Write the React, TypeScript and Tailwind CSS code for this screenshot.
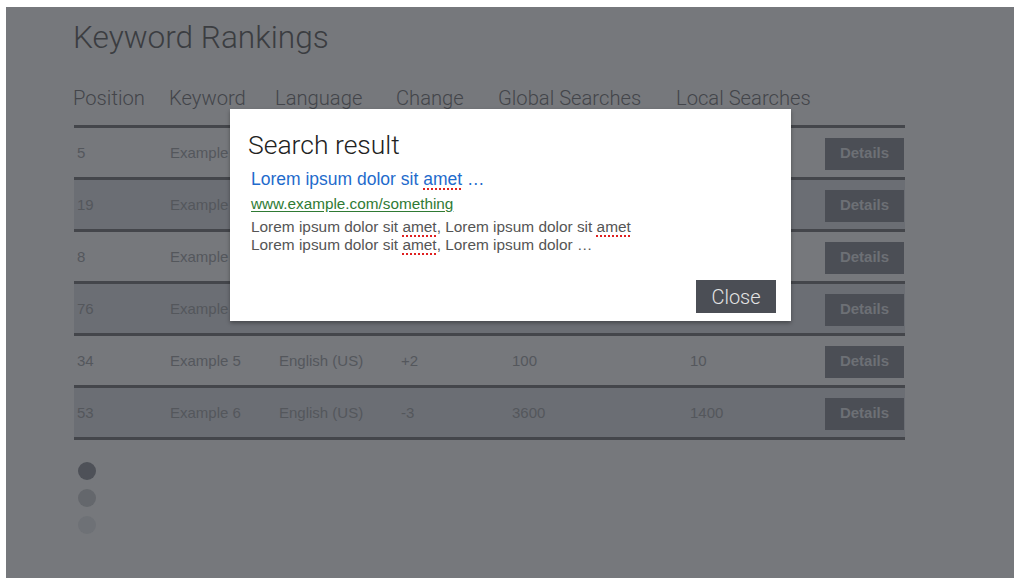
import React from 'react';

type Row = {
  pos: string;
  keyword: string;
  language: string;
  change: string;
  global: string;
  local: string;
};

const rows: Row[] = [
  { pos: '5', keyword: 'Example 1', language: 'English (US)', change: '+1', global: '2400', local: '880' },
  { pos: '19', keyword: 'Example 2', language: 'English (US)', change: '-4', global: '720', local: '90' },
  { pos: '8', keyword: 'Example 3', language: 'English (US)', change: '0', global: '1900', local: '320' },
  { pos: '76', keyword: 'Example 4', language: 'English (US)', change: '+12', global: '260', local: '40' },
  { pos: '34', keyword: 'Example 5', language: 'English (US)', change: '+2', global: '100', local: '10' },
  { pos: '53', keyword: 'Example 6', language: 'English (US)', change: '-3', global: '3600', local: '1400' },
];

const light = { fontFamily: 'Roboto, "Liberation Sans", sans-serif' };
const sans = { fontFamily: '"Liberation Sans", Arial, sans-serif' };

const cols = 'grid grid-cols-[93px_109px_122px_111px_178px_1fr] items-center';

function Amet() {
  return (
    <span className="underline decoration-dotted decoration-[#e02020] decoration-2 underline-offset-[3px]">amet</span>
  );
}

function ResultModal() {
  return (
    <div
      className="absolute left-[224px] top-[102px] w-[561px] h-[212px] bg-white shadow-[0_2px_4px_rgba(0,0,0,0.35)] flex flex-col"
      style={sans}
    >
      <h2 className="pl-[18px] pt-[21px] text-[26.5px] leading-[30px] font-light text-[#222]" style={light}>
        Search result
      </h2>
      <div className="pl-[21px]">
        <a className="block mt-[9px] text-[17.5px] leading-[20px] text-[#1f6bcc]">
          Lorem ipsum dolor sit <Amet /> …
        </a>
        <div className="mt-[6px] text-[15.3px] leading-[18px] text-[#2f7a34] underline underline-offset-2">
          www.example.com/something
        </div>
        <p className="mt-[5px] text-[15.4px] leading-[18px] text-[#555]">
          Lorem ipsum dolor sit <Amet />, Lorem ipsum dolor sit <Amet />
          <br />
          Lorem ipsum dolor sit <Amet />, Lorem ipsum dolor …
        </p>
      </div>
      <button
        className="mt-auto self-end mr-[15px] mb-[8px] w-[80px] h-[33px] bg-[#4b4e55] text-[20px] font-light text-[#e4e4e4]"
        style={light}
      >
        Close
      </button>
    </div>
  );
}

export default function App() {
  return (
    <div className="min-h-screen bg-white pt-[7px] pl-[6px]">
      <div className="relative h-[571px] bg-[#76787c] pl-[67px] overflow-hidden">
        <h1 className="pt-[13px] text-[31.6px] leading-[36px] font-light text-[#3b3d41]" style={light}>
          Keyword Rankings
        </h1>

        <div
          className="mt-[30px] flex text-[20.2px] leading-[24px] font-light text-[#43454a] whitespace-nowrap"
          style={light}
        >
          <span className="w-[96px]">Position</span>
          <span className="w-[106px]">Keyword</span>
          <span className="w-[121px]">Language</span>
          <span className="w-[102px]">Change</span>
          <span className="w-[178px]">Global Searches</span>
          <span>Local Searches</span>
        </div>

        <div className="mt-[15px] ml-[1px] w-[831px] border-t-[3px] border-[#44464b]" style={sans}>
          {rows.map((r, i) => (
            <div
              key={r.pos}
              className={`${cols} h-[52px] border-b-[3px] border-[#44464b] pl-[3px] pt-[2px] text-[15px] text-[#54575c] ${
                i % 2 === 1 ? 'bg-[#6b6e74]' : ''
              }`}
            >
              <span>{r.pos}</span>
              <span>{r.keyword}</span>
              <span>{r.language}</span>
              <span>{r.change}</span>
              <span>{r.global}</span>
              <span className="flex items-center justify-between pr-[1px]">
                <span>{r.local}</span>
                <button className="w-[79px] h-[32px] bg-[#4b4e55] text-[15px] font-bold text-[#6d7075]">
                  Details
                </button>
              </span>
            </div>
          ))}
        </div>

        <div className="mt-[22px] ml-[5px] flex flex-col gap-[9px]">
          <span className="w-[18px] h-[18px] rounded-full bg-[#4e5158]" />
          <span className="w-[18px] h-[18px] rounded-full bg-[#64676c]" />
          <span className="w-[18px] h-[18px] rounded-full bg-[#6e7176]" />
        </div>

        <ResultModal />
      </div>
    </div>
  );
}
